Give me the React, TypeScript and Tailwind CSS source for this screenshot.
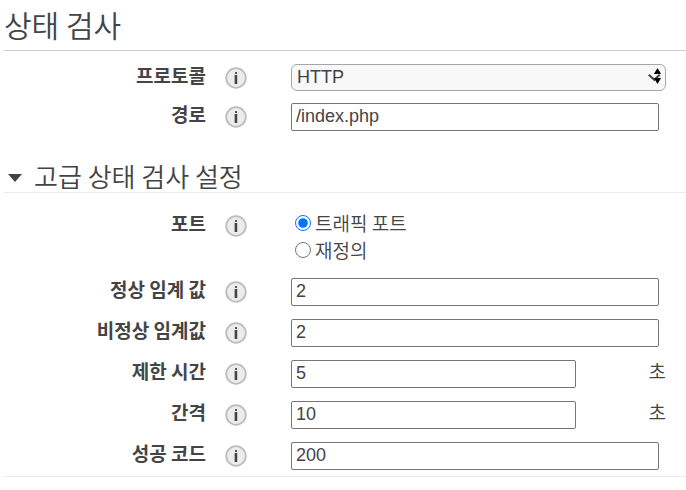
import { useState } from 'react'
import type { ReactNode } from 'react'

interface RowProps {
  label: string
  htmlFor?: string
  children: ReactNode
}

function InfoIcon() {
  return (
    <svg viewBox="0 0 22 22" className="size-[22px]" aria-hidden="true">
      <circle cx="11" cy="11" r="9.8" fill="#ececec" stroke="#bdbdbd" strokeWidth="1.8" />
      <rect x="10" y="5" width="2" height="2" fill="#555" />
      <rect x="9" y="8" width="1" height="9" fill="#b0b0b0" />
      <rect x="10" y="8" width="2" height="9" fill="#444" />
      <rect x="12" y="8" width="1" height="9" fill="#c4c4c4" />
    </svg>
  )
}

function Row(props: RowProps) {
  const { label, htmlFor, children } = props

  return (
    <div className="flex items-start">
      <label
        htmlFor={htmlFor}
        id={htmlFor ? undefined : 'port-label'}
        className="w-[202px] shrink-0 text-right text-[19px] leading-[22px] font-bold"
      >
        {label}
      </label>
      <button type="button" aria-label={`${label} 정보`} className="ml-[19px] mt-[3px] shrink-0">
        <InfoIcon />
      </button>
      <div className="ml-11 mr-5 min-w-0 flex-1">{children}</div>
    </div>
  )
}

interface TextFieldProps {
  id: string
  label: string
  value: string
  unit?: string
}

function TextField(props: TextFieldProps) {
  const { id, label, value, unit } = props

  return (
    <Row label={label} htmlFor={id}>
      <div className="flex items-start">
        <input
          id={id}
          type="text"
          defaultValue={value}
          className="h-7 min-w-0 flex-1 rounded-xs border border-[#767676] bg-white px-1 pb-0.5 font-['Liberation_Sans',sans-serif] text-[18px] leading-6"
        />
        {unit ? (
          <span className="w-[90px] text-right text-[19px] leading-[22px] font-[350]">{unit}</span>
        ) : (
          <span className="w-[7px]" />
        )}
      </div>
    </Row>
  )
}

function ProtocolSelect() {
  return (
    <div className="relative">
      <select
        id="protocol"
        defaultValue="HTTP"
        className="block h-[27px] w-full appearance-none rounded-md border border-[#a6a6a6] bg-[#f8f8f8] px-[5px] pb-0.5 font-['Liberation_Sans',sans-serif] text-[18px] leading-6"
      >
        <option>HTTP</option>
        <option>HTTPS</option>
      </select>
      <svg
        viewBox="0 0 14 18"
        className="pointer-events-none absolute right-1 top-1 h-[18px] w-3.5"
        aria-hidden="true"
      >
        <path d="M.7 6.8l5.6 5 5.4-5" fill="none" stroke="#444" strokeWidth="2" />
        <path d="M9.5 0l3.6 6H5.9z M5.9 10h7.2L9.5 16z" fill="#000" />
      </svg>
    </div>
  )
}

export default function App() {
  const [open, setOpen] = useState(true)
  const [port, setPort] = useState('traffic')

  return (
    <form className="bg-white pl-1 font-['Noto_Sans_CJK_KR',sans-serif] text-[#444]">
      <h2 className="border-b border-[#ccc] pb-1.5 pt-1 text-[30px] leading-10 font-[350]">상태 검사</h2>
      <div className="mt-[13px] flex flex-col gap-3">
        <Row label="프로토콜" htmlFor="protocol">
          <ProtocolSelect />
        </Row>
        <TextField id="path" label="경로" value="/index.php" />
      </div>
      <h3 className="mt-[29px] border-b border-[#eaeaea] text-[26px] font-[350]">
        <button
          type="button"
          aria-expanded={open}
          onClick={() => setOpen(!open)}
          className="flex items-center gap-3 pl-1 leading-8"
        >
          <svg viewBox="0 0 14 8" className="mt-1 h-2 w-3.5" aria-hidden="true">
            <path d="M0 0h14L7 8z" fill="#444" />
          </svg>
          고급 상태 검사 설정
        </button>
      </h3>
      {open && (
        <div className="mt-[19px] flex flex-col gap-[13px] border-b border-[#eaeaea] pb-1.5">
          <Row label="포트">
            <div
              role="radiogroup"
              aria-labelledby="port-label"
              className="-mt-[3px] pb-0.5 text-[19px] leading-[27px] font-[350]"
            >
              <label className="flex items-center">
                <input
                  type="radio"
                  name="port"
                  checked={port === 'traffic'}
                  onChange={() => setPort('traffic')}
                  className="mx-1 size-4 accent-[#0075ff]"
                />
                트래픽 포트
              </label>
              <label className="flex items-center">
                <input
                  type="radio"
                  name="port"
                  checked={port === 'override'}
                  onChange={() => setPort('override')}
                  className="mx-1 size-4"
                />
                재정의
              </label>
            </div>
          </Row>
          <TextField id="healthy" label="정상 임계 값" value="2" />
          <TextField id="unhealthy" label="비정상 임계값" value="2" />
          <TextField id="timeout" label="제한 시간" value="5" unit="초" />
          <TextField id="interval" label="간격" value="10" unit="초" />
          <TextField id="codes" label="성공 코드" value="200" />
        </div>
      )}
    </form>
  )
}
